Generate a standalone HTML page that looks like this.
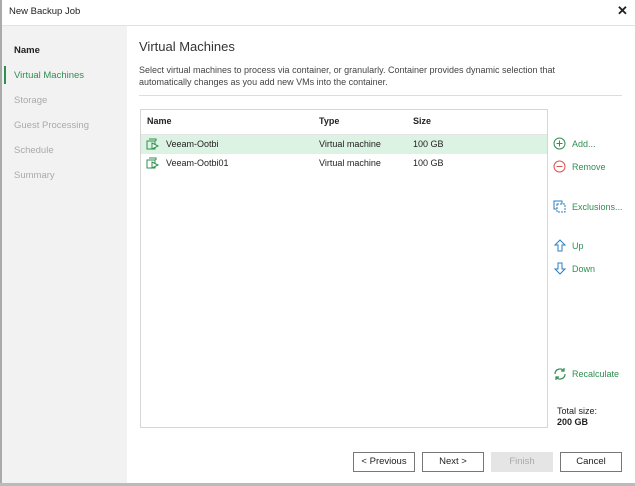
<!DOCTYPE html>
<html><head><style>
*{margin:0;padding:0;box-sizing:border-box}
body{width:635px;height:486px;background:#fff;font-family:"Liberation Sans",sans-serif;font-size:9px;color:#222;position:relative;overflow:hidden}
.a{position:absolute}
.side div{position:absolute;left:12px;font-size:9.5px;color:#aaa}
.g{color:#2f8f4f}
.btn{position:absolute;top:452px;width:62px;height:20px;border:1px solid #777;background:#fff;text-align:center;line-height:18px;font-size:9.5px}
</style></head><body>
<div class="a" style="left:0;top:0;width:2px;height:486px;background:#aaa"></div>
<div class="a" style="left:9px;top:6px;font-size:9.5px">New Backup Job</div>
<div class="a" style="left:617px;top:3px;font-size:13px;font-weight:bold">✕</div>
<div class="a" style="left:2px;top:25px;width:633px;height:1px;background:#e2e2e2"></div>
<div class="a side" style="left:2px;top:26px;width:125px;height:458px;background:#f2f2f2">
<div style="top:19px;color:#222;font-weight:bold;font-size:9.5px">Name</div>
<div style="top:44px;color:#2f8f4f;font-size:9.5px">Virtual Machines</div>
<div style="top:69px">Storage</div>
<div style="top:94px">Guest Processing</div>
<div style="top:119px">Schedule</div>
<div style="top:144px">Summary</div>
</div>
<div class="a" style="left:4px;top:66px;width:2px;height:18px;background:#2f8f4f"></div>
<div class="a" style="left:139px;top:39px;font-size:13px;color:#333">Virtual Machines</div>
<div class="a" style="left:139px;top:64px;font-size:9px;line-height:12px;color:#444;width:460px">Select virtual machines to process via container, or granularly. Container provides dynamic selection that automatically changes as you add new VMs into the container.</div>
<div class="a" style="left:139px;top:95px;width:483px;height:1px;background:#ddd"></div>
<div class="a" style="left:140px;top:109px;width:408px;height:319px;border:1px solid #d6d6d6"></div>
<div class="a" style="left:147px;top:116px;font-weight:bold">Name</div>
<div class="a" style="left:319px;top:116px;font-weight:bold">Type</div>
<div class="a" style="left:413px;top:116px;font-weight:bold">Size</div>
<div class="a" style="left:141px;top:134px;width:406px;height:1px;background:#e5e5e5"></div>
<div class="a" style="left:141px;top:135px;width:406px;height:19px;background:#dcf2e2"></div>
<svg class="a" style="left:146px;top:138px" width="14" height="13"><rect x="1" y="3" width="8" height="8" fill="none" stroke="#2f8f4f"/><path d="M3 1h7v2" fill="none" stroke="#2f8f4f"/><path d="M6 5l6 3-6 3z" fill="#fff" stroke="#2f8f4f"/></svg>
<svg class="a" style="left:146px;top:157px" width="14" height="13"><rect x="1" y="3" width="8" height="8" fill="none" stroke="#2f8f4f"/><path d="M3 1h7v2" fill="none" stroke="#2f8f4f"/><path d="M6 5l6 3-6 3z" fill="#fff" stroke="#2f8f4f"/></svg>
<div class="a" style="left:166px;top:139px">Veeam-Ootbi</div><div class="a" style="left:319px;top:139px">Virtual machine</div><div class="a" style="left:413px;top:139px">100 GB</div>
<div class="a" style="left:166px;top:158px">Veeam-Ootbi01</div><div class="a" style="left:319px;top:158px">Virtual machine</div><div class="a" style="left:413px;top:158px">100 GB</div>
<svg class="a" style="left:553px;top:137px" width="13" height="13"><circle cx="6.5" cy="6.5" r="5.5" fill="none" stroke="#2f8f4f"/><path d="M6.5 3.5v6M3.5 6.5h6" stroke="#2f8f4f"/></svg>
<div class="a g" style="left:572px;top:139px">Add...</div>
<svg class="a" style="left:553px;top:160px" width="13" height="13"><circle cx="6.5" cy="6.5" r="5.5" fill="none" stroke="#d9534f"/><path d="M3.5 6.5h6" stroke="#d9534f"/></svg>
<div class="a g" style="left:572px;top:162px">Remove</div>
<svg class="a" style="left:553px;top:200px" width="14" height="14"><rect x="1" y="1" width="8" height="8" fill="none" stroke="#2a7fc0"/><rect x="4" y="4" width="8" height="8" fill="#fff" stroke="#2a7fc0" stroke-dasharray="2 1"/></svg>
<div class="a g" style="left:572px;top:202px">Exclusions...</div>
<svg class="a" style="left:553px;top:239px" width="14" height="13"><path d="M7 1l5 5H9v6H5V6H2z" fill="none" stroke="#2a7fc0"/></svg>
<div class="a g" style="left:572px;top:241px">Up</div>
<svg class="a" style="left:553px;top:262px" width="14" height="13"><path d="M7 12l5-5H9V1H5v6H2z" fill="none" stroke="#2a7fc0"/></svg>
<div class="a g" style="left:572px;top:264px">Down</div>
<svg class="a" style="left:553px;top:367px" width="14" height="14"><path d="M2 7a5 5 0 0 1 9-3M12 7a5 5 0 0 1-9 3M11 1v3H8M3 13v-3h3" fill="none" stroke="#2f8f4f" stroke-width="1.2"/></svg>
<div class="a g" style="left:572px;top:369px">Recalculate</div>
<div class="a" style="left:557px;top:406px">Total size:</div>
<div class="a" style="left:557px;top:417px;font-weight:bold">200 GB</div>
<div class="btn" style="left:353px">&lt; Previous</div>
<div class="btn" style="left:422px">Next &gt;</div>
<div class="btn" style="left:491px;background:#e5e5e5;border-color:#e5e5e5;color:#aaa">Finish</div>
<div class="btn" style="left:560px">Cancel</div>
<div class="a" style="left:0;top:483px;width:635px;height:3px;background:#bbb"></div>
</body></html>
